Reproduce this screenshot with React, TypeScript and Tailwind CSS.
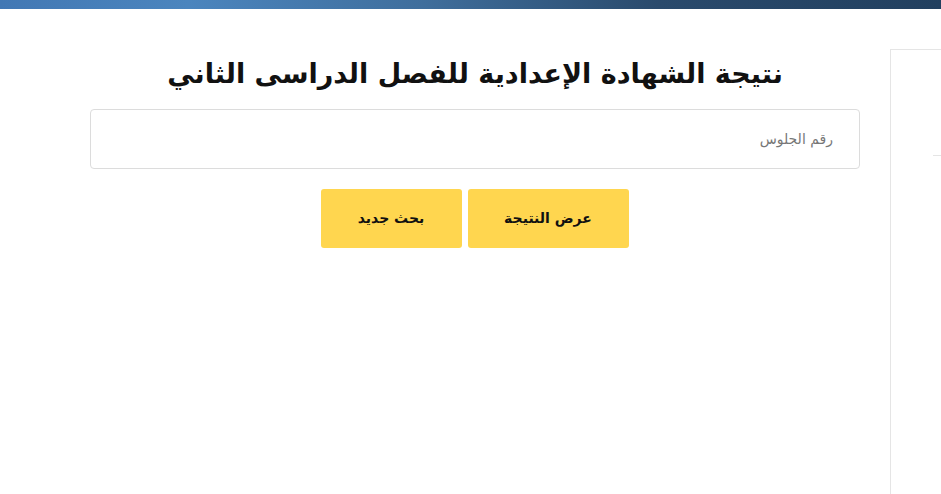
import React from "react";

export default function App() {
  return (
    <div className="flex min-h-[494px] w-full flex-col bg-white" style={{ fontFamily: '"DejaVu Sans", sans-serif' }}>
      <div className="h-[9px] w-full bg-[linear-gradient(90deg,#4278b4_0%,#4b85be_20%,#3f6e9c_45%,#2a4a6c_70%,#22405f_100%)]" />
      <div className="flex flex-1 flex-row">
        <div className="ml-[90px] w-[770px]" dir="rtl">
          <h1 className="mt-[45px] text-center text-[27px] font-bold leading-[40px] text-[#111]">
            نتيجة الشهادة الإعدادية للفصل الدراسى الثاني
          </h1>
          <div className="mt-[15px] flex h-[60px] items-center rounded-[4px] border border-[#dcdcdc] px-[26px]">
            <span className="text-[14px] text-[#777]">رقم الجلوس</span>
          </div>
          <div className="mt-[20px] flex justify-center gap-[6px] pr-[1px]">
            <button className="h-[59px] w-[161px] rounded-[3px] bg-[#ffd64f] text-[14px] font-bold text-[#111]">
              عرض النتيجة
            </button>
            <button className="h-[59px] w-[141px] rounded-[3px] bg-[#ffd64f] text-[14px] font-bold text-[#111]">
              بحث جديد
            </button>
          </div>
        </div>
        <div className="ml-[30px] mt-[40px] flex-1 border-l border-t border-[#e5e5e5]">
          <div className="mt-[105px] ml-[42px] h-px bg-[#e5e5e5]" />
        </div>
      </div>
    </div>
  );
}
